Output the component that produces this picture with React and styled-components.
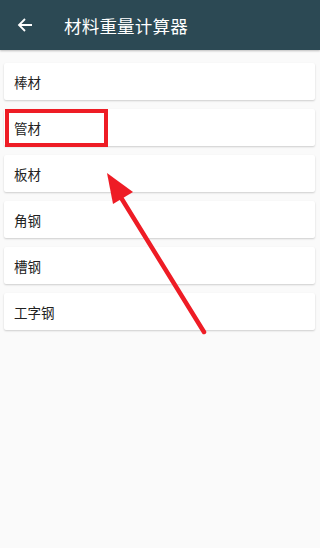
import React from "react";
import styled, { createGlobalStyle } from "styled-components";

const GlobalStyle = createGlobalStyle`
  html, body {
    margin: 0;
    padding: 0;
    background: #fafafa;
    font-family: "Noto Sans CJK SC", "Noto Sans", sans-serif;
  }
`;

const materials = ["棒材", "管材", "板材", "角钢", "槽钢", "工字钢"];

function App() {
  return (
    <Page>
      <GlobalStyle />
      <Header>
        <BackButton aria-label="返回">
          <svg width="16" height="16" viewBox="0 0 16 16">
            <path
              d="M15 8H2M8 2L2 8l6 6"
              fill="none"
              stroke="#fff"
              strokeWidth="1.8"
            />
          </svg>
        </BackButton>
        <Title>材料重量计算器</Title>
      </Header>
      <List>
        {materials.map((name) => (
          <Item key={name}>
            <ItemText>{name}</ItemText>
            {name === "管材" && <Highlight />}
          </Item>
        ))}
      </List>
      <Annotation width="320" height="548" viewBox="0 0 320 548">
        <line
          x1="120"
          y1="196"
          x2="204"
          y2="332"
          stroke="#ee1c25"
          strokeWidth="4.5"
          strokeLinecap="round"
        />
        <polygon points="107,173 113,204 133,192" fill="#ee1c25" />
      </Annotation>
    </Page>
  );
}

export default App;

const Page = styled.div`
  position: relative;
  width: 320px;
  height: 548px;
  overflow: hidden;
  background: #fafafa;
`;

const Header = styled.header`
  display: flex;
  align-items: center;
  height: 50px;
  background: #2c4954;
  box-shadow: 0 1px 2px rgba(0, 0, 0, 0.25);
`;

const BackButton = styled.div`
  display: flex;
  align-items: center;
  justify-content: center;
  width: 16px;
  height: 16px;
  margin-left: 17px;
`;

const Title = styled.h1`
  margin: 0 0 0 31px;
  color: #fff;
  font-size: 17.5px;
  font-weight: 400;
  letter-spacing: 0.2px;
`;

const List = styled.div`
  display: flex;
  flex-direction: column;
  gap: 9px;
  padding: 13px 5px 0 4px;
`;

const Item = styled.div`
  position: relative;
  display: flex;
  align-items: center;
  height: 37px;
  padding-left: 10px;
  background: #fff;
  border-radius: 2px;
  box-shadow: 0 1px 2px rgba(0, 0, 0, 0.18);
`;

const ItemText = styled.span`
  color: #222;
  font-size: 13.5px;
`;

const Highlight = styled.div`
  position: absolute;
  left: 1px;
  top: 0;
  width: 103px;
  height: 38px;
  box-sizing: border-box;
  border: 4.5px solid #ee1c25;
`;

const Annotation = styled.svg`
  position: absolute;
  left: 0;
  top: 0;
  pointer-events: none;
`;
